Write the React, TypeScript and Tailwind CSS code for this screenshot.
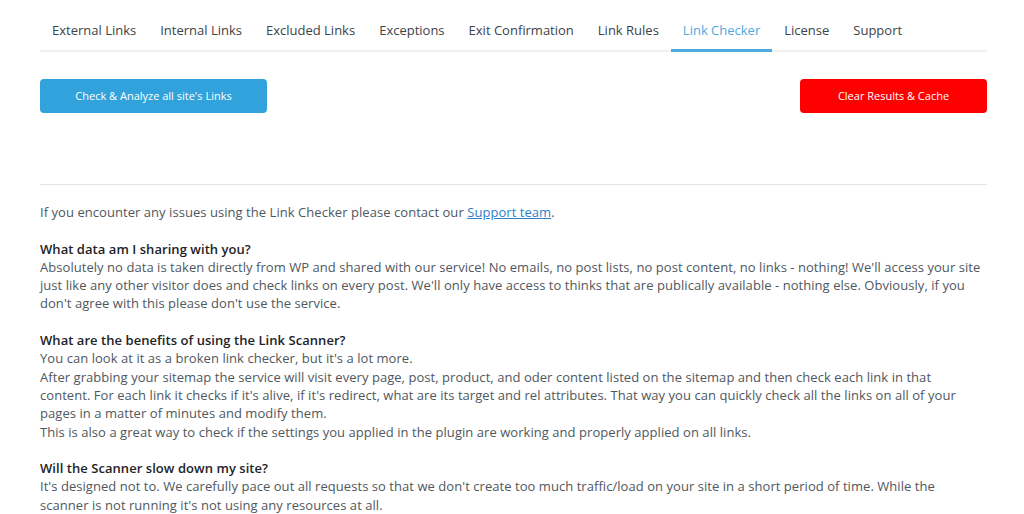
import React from 'react';

const tabs = [
  'External Links',
  'Internal Links',
  'Excluded Links',
  'Exceptions',
  'Exit Confirmation',
  'Link Rules',
  'Link Checker',
  'License',
  'Support',
];

export default function App() {
  return (
    <div className="w-[1024px] h-[514px] overflow-hidden bg-white pl-[40px] pr-[37px] font-['Open_Sans',sans-serif]">
      {/* Tabs */}
      <nav className="flex border-b-2 border-[#f0f0f1]">
        {tabs.map((t) => (
          <div
            key={t}
            className={
              t === 'Link Checker'
                ? 'px-3 pt-[21px] pb-[9px] -mb-[2px] border-b-[3px] border-[#4ea9de] text-[13px] leading-[18px] font-medium text-[#4ea9de]'
                : 'px-3 pt-[21px] pb-[11px] text-[13px] leading-[18px] font-medium text-[#3c434a]'
            }
          >
            {t}
          </div>
        ))}
      </nav>

      {/* Actions */}
      <div className="mt-[27px] flex justify-between">
        <button className="h-[34px] w-[227px] rounded-sm bg-[#31a2db] text-[11px] text-white">
          Check &amp; Analyze all site's Links
        </button>
        <button className="h-[34px] w-[187px] rounded-sm bg-[#ff0000] text-[11px] text-white">
          Clear Results &amp; Cache
        </button>
      </div>

      <div className="mt-[71px] border-t border-[#e2e4e7]" />

      {/* Info */}
      <div className="mt-[18px] whitespace-nowrap text-[13px] tracking-[0.05px] leading-[18.3px] text-[#50575e]">
        <p>
          If you encounter any issues using the Link Checker please contact our{' '}
          <a href="#" className="text-[#2f7fc6] underline">Support team</a>.
        </p>

        <p className="mt-[18.3px]">
          <b className="font-semibold text-[#1d2327]">What data am I sharing with you?</b>
          <br />
          Absolutely no data is taken directly from WP and shared with our service! No emails, no post lists, no post content, no links - nothing! We'll access your site
          <br />
          just like any other visitor does and check links on every post. We'll only have access to thinks that are publically available - nothing else. Obviously, if you
          <br />
          don't agree with this please don't use the service.
        </p>

        <p className="mt-[18.3px]">
          <b className="font-semibold text-[#1d2327]">What are the benefits of using the Link Scanner?</b>
          <br />
          You can look at it as a broken link checker, but it's a lot more.
          <br />
          After grabbing your sitemap the service will visit every page, post, product, and oder content listed on the sitemap and then check each link in that
          <br />
          content. For each link it checks if it's alive, if it's redirect, what are its target and rel attributes. That way you can quickly check all the links on all of your
          <br />
          pages in a matter of minutes and modify them.
          <br />
          This is also a great way to check if the settings you applied in the plugin are working and properly applied on all links.
        </p>

        <p className="mt-[18.3px]">
          <b className="font-semibold text-[#1d2327]">Will the Scanner slow down my site?</b>
          <br />
          It's designed not to. We carefully pace out all requests so that we don't create too much traffic/load on your site in a short period of time. While the
          <br />
          scanner is not running it's not using any resources at all.
        </p>
      </div>
    </div>
  );
}
